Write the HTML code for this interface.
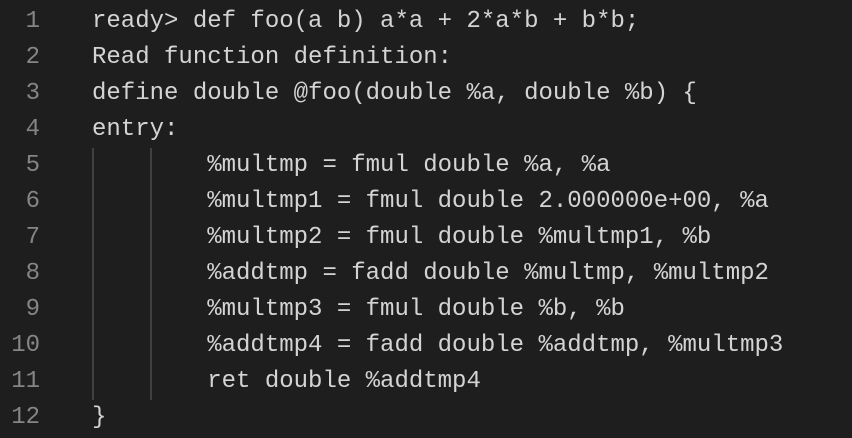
<!DOCTYPE html>
<html><head><meta charset="utf-8"><style>
html,body{margin:0;padding:0;background:#1e1e1e;width:852px;height:438px;overflow:hidden}
.w{position:relative;width:852px;height:438px;font-family:"Liberation Mono",monospace;font-size:24px}
.n{position:absolute;left:0;width:40px;text-align:right;color:#858585;height:36px;line-height:36px}
.t{position:absolute;left:92px;color:#d4d4d4;white-space:pre;height:36px;line-height:36px}
.g{position:absolute;top:148px;height:252px;width:2px;background:#404040}
</style></head><body><div class="w">
<div class="g" style="left:92px"></div><div class="g" style="left:150px"></div>
<div class="n" style="top:4px">1</div><div class="t" style="top:4px">ready&gt; def foo(a b) a*a + 2*a*b + b*b;</div>
<div class="n" style="top:40px">2</div><div class="t" style="top:40px">Read function definition:</div>
<div class="n" style="top:76px">3</div><div class="t" style="top:76px">define double @foo(double %a, double %b) {</div>
<div class="n" style="top:112px">4</div><div class="t" style="top:112px">entry:</div>
<div class="n" style="top:148px">5</div><div class="t" style="top:148px">        %multmp = fmul double %a, %a</div>
<div class="n" style="top:184px">6</div><div class="t" style="top:184px">        %multmp1 = fmul double 2.000000e+00, %a</div>
<div class="n" style="top:220px">7</div><div class="t" style="top:220px">        %multmp2 = fmul double %multmp1, %b</div>
<div class="n" style="top:256px">8</div><div class="t" style="top:256px">        %addtmp = fadd double %multmp, %multmp2</div>
<div class="n" style="top:292px">9</div><div class="t" style="top:292px">        %multmp3 = fmul double %b, %b</div>
<div class="n" style="top:328px">10</div><div class="t" style="top:328px">        %addtmp4 = fadd double %addtmp, %multmp3</div>
<div class="n" style="top:364px">11</div><div class="t" style="top:364px">        ret double %addtmp4</div>
<div class="n" style="top:400px">12</div><div class="t" style="top:400px">}</div>
</div></body></html>
